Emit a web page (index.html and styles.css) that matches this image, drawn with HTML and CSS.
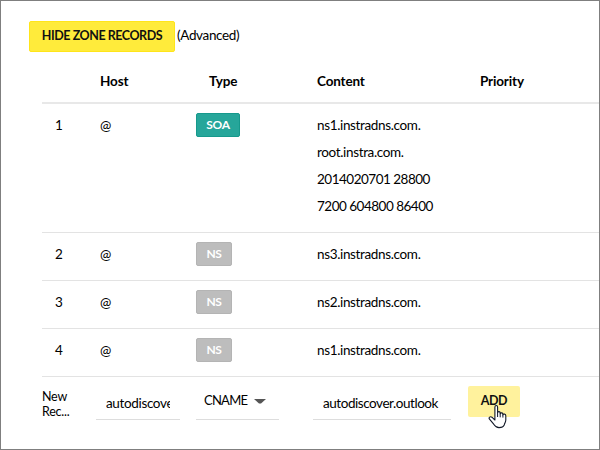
FILE: index.html
```html
<!DOCTYPE html>
<html lang="en">
<head>
<meta charset="utf-8">
<title>Zone records</title>
<link rel="stylesheet" href="styles.css">
</head>
<body>
<main class="panel">
  <div class="toolbar"><button class="btn toggle">HIDE ZONE RECORDS</button><span class="hint">(Advanced)</span></div>
  <div class="records">
    <div class="row head"><span></span><span>Host</span><span class="type-head">Type</span><span>Content</span><span>Priority</span></div>
    <div class="row soa-row"><span class="num">1</span><span class="at">@</span><span><b class="badge soa">SOA</b></span><span>ns1.instradns.com.<br>root.instra.com.<br><span class="digits">2014020701 28800<br>7200 604800 86400</span></span></div>
    <div class="row"><span class="num">2</span><span class="at">@</span><span><b class="badge">NS</b></span><span>ns3.instradns.com.</span></div>
    <div class="row"><span class="num">3</span><span class="at">@</span><span><b class="badge">NS</b></span><span>ns2.instradns.com.</span></div>
    <div class="row"><span class="num">4</span><span class="at">@</span><span><b class="badge">NS</b></span><span>ns1.instradns.com.</span></div>
  </div>
  <div class="new-record">
    <span class="label">New<br>Rec...</span>
    <div class="field host"><span class="value">autodiscove</span></div>
    <div class="field select"><span class="choice">CNAME</span><svg class="caret" viewBox="0 0 12 5"><path d="M0 0H12L7 4.5H5Z" fill="#555"/></svg></div>
    <div class="field content"><span class="value">autodiscover.outlook</span></div>
    <div class="add-wrap">
      <button class="btn add">ADD</button>
      <svg class="cursor" viewBox="0 0 20 26"><path d="M6.9 14V3.2C6.9 1 9.6 1 9.6 3.2V8.6C9.8 7.1 12.2 7.3 12.2 8.9V9.8C12.5 8.4 14.9 8.6 14.9 10.2V10.9C15.3 9.5 17.8 9.9 17.8 11.7V16C17.8 18 16.8 19 16.2 21C15.3 23.1 13.5 23.6 11 23.6C8.2 23.6 7 22.2 5.7 20.2L1.5 15.2C.2 13.4 2.4 12 3.9 13.2L6.9 16Z" fill="#fff" stroke="#111827" stroke-width="1.1" stroke-linejoin="round"/><path d="M9.6 8.5V13M12.2 9.5V13.3M14.9 10.6V13.6" fill="none" stroke="#111827" stroke-width="1"/></svg>
    </div>
  </div>
</main>
</body>
</html>
```
FILE: styles.css
```css
* { box-sizing: border-box; }
body { margin: 0; font-family: Lato, sans-serif; font-size: 13.5px; letter-spacing: -0.35px; color: #000; background: #fff; }
.panel { width: 600px; height: 450px; border: 1px solid #7f7f7f; padding: 20px 0 0 28px; overflow: hidden; }
.toolbar { display: flex; height: 41px; }
.btn { font-family: inherit; font-weight: 700; font-size: 12.5px; letter-spacing: -0.45px; color: #111; border: 0; border-radius: 2px; padding: 0 0 2px; white-space: nowrap; }
.toggle { width: 146px; height: 31px; background: #ffeb3b; border: 1px solid #ffe51a; }
.hint { margin-left: 2px; line-height: 28px; }
.records { margin-left: 13px; }
.row { display: grid; grid-template-columns: 58px 96px 121px 163px 1fr; height: 48px; border-bottom: 1px solid #e3e3e3; padding-top: 8px; line-height: 27px; white-space: nowrap; }
.row.head { height: 42px; padding-top: 6px; font-weight: 700; letter-spacing: -0.15px; border-bottom: 2px solid #e8e8e8; }
.type-head { padding-left: 13px; }
.row.soa-row { height: 129px; }
.digits { letter-spacing: -0.5px; }
.num { padding-left: 13px; }
.badge { display: block; width: 36px; height: 24px; margin-top: 1px; border: 1px solid #b4b4b4; border-radius: 2px; background: #bdbdbd; color: #fff; font-size: 12px; line-height: 22px; text-align: center; }
.soa { width: 44px; background: #26a69a; border-color: #16998c; }
.new-record { display: flex; align-items: flex-start; margin-left: 13px; padding-top: 9px; }
.label { width: 54px; padding-top: 4px; font-size: 12.5px; letter-spacing: -0.25px; line-height: 14.5px; }
.field { height: 34px; border-bottom: 1px solid #ddd; line-height: 35px; white-space: nowrap; }
.value { display: block; overflow: hidden; }
.host { width: 84px; padding: 0 10px; margin-right: 16px; }
.select { display: flex; align-items: center; width: 83px; padding: 0 0 4px 8px; margin-right: 34px; }
.choice { width: 43px; font-size: 13px; letter-spacing: -0.75px; }
.caret { width: 12px; height: 5px; margin: 2px 0 0 7px; }
.content { width: 138px; padding: 0 10px; margin-right: 17px; }
.content .value { letter-spacing: -0.45px; }
.add-wrap { position: relative; }
.add { width: 52px; height: 31px; background: #fff29d; }
.cursor { position: absolute; left: 20px; top: 18px; width: 20px; height: 26px; }
```
